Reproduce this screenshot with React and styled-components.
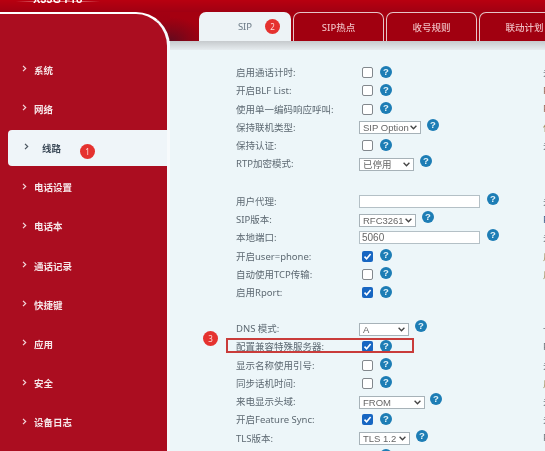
import React from "react";
import styled, { createGlobalStyle } from "styled-components";

const Global = createGlobalStyle`
  html, body { margin: 0; padding: 0; background: #edf6f9; }
  body { font-family: "Noto Sans", "Noto Sans CJK SC", sans-serif; }
`;

const Page = styled.div`
  width: 545px;
  height: 451px;
  overflow: hidden;
  display: flex;
  flex-direction: column;
  filter: blur(0.35px);
`;

const BrandStrip = styled.header`
  height: 12px;
  flex: none;
  overflow: hidden;
  background: linear-gradient(#b80010, #a00012);
  padding-left: 16px;
`;

const Brand = styled.div`
  width: 84px;
  height: 12px;
  margin-top: -7px;
  font-family: "Liberation Sans", sans-serif;
  font-size: 10.5px;
  line-height: 12px;
  font-weight: 700;
  color: #fff;
  text-align: center;
  letter-spacing: 0.3px;
  background: linear-gradient(90deg, transparent, rgba(255, 190, 190, 0.55) 25%, rgba(255, 190, 190, 0.55) 75%, transparent) 0 8px / 100% 1px no-repeat;
`;

const Body = styled.div`
  flex: 1;
  min-height: 0;
  display: flex;
  background: linear-gradient(#a30012 0, #a00012 8px, #6e0a1e 29px, #edf6f9 29px);
`;

const Sidebar = styled.nav`
  width: 167px;
  flex: none;
  background: #ab0d20;
  border-top: 2px solid #fff;
  border-right: 3px solid #f7fafc;
  border-top-right-radius: 34px;
  padding-top: 36px;
`;

const NavItem = styled.div`
  position: relative;
  height: ${(p) => (p.$active ? "36px" : "39.2px")};
  margin: ${(p) => (p.$active ? "1.6px 0 1.6px 8px" : "0")};
  padding-left: ${(p) => (p.$active ? "16px" : "22px")};
  display: flex;
  align-items: center;
  gap: ${(p) => (p.$active ? "13px" : "7px")};
  font-size: 9.5px;
  font-weight: 700;
  color: ${(p) => (p.$active ? "#3c4a58" : "#f6e6e8")};
  background: ${(p) => (p.$active ? "#eff5f9" : "transparent")};
  border-radius: ${(p) => (p.$active ? "4px 0 0 4px" : "0")};
  svg { flex: none; margin-top: -2px; }
`;

const Badge = styled.span`
  position: absolute;
  width: 15px;
  height: 15px;
  border-radius: 50%;
  background: #e5322f;
  color: #ffd9d6;
  font-size: 8px;
  font-weight: 400;
  line-height: 15px;
  text-align: center;
  left: ${(p) => p.$left}px;
  top: ${(p) => p.$top}px;
`;

const Main = styled.main`
  flex: 1;
  min-width: 0;
  display: flex;
  flex-direction: column;
`;

const TabBar = styled.div`
  height: 29px;
  flex: none;
  display: flex;
  gap: 2px;
  padding-left: 29px;
  overflow: hidden;
  background: radial-gradient(ellipse 36px 24px at 0 100%, #640a1e, rgba(120, 6, 24, 0.6) 55%, transparent), #a50010;
`;

const Tab = styled.div`
  position: relative;
  flex: none;
  width: ${(p) => (p.$active ? "92px" : "91px")};
  box-sizing: border-box;
  border: ${(p) => (p.$active ? "none" : "1px solid #e6c4c8")};
  border-bottom: none;
  border-radius: 7px 7px 0 0;
  background: ${(p) => (p.$active ? "#edf3f6" : "#a10010")};
  color: ${(p) => (p.$active ? "#6b7a86" : "#efbcc1")};
  font-size: 9.5px;
  font-weight: ${(p) => (p.$active ? 400 : 500)};
  display: flex;
  align-items: center;
  justify-content: center;
`;

const ShadowBand = styled.div`
  height: 9px;
  flex: none;
  background: linear-gradient(#c6cacd, #e6ecef);
`;

const Content = styled.div`
  flex: 1;
  min-height: 0;
  background: #edf6f9;
  padding: 13px 0 0 66px;
  overflow: hidden;
`;

const Spacer = styled.div`
  height: ${(p) => p.$h}px;
`;

const Row = styled.div`
  position: relative;
  height: 18.25px;
  display: flex;
  align-items: center;
  font-size: 9.5px;
  color: #5d6972;
  white-space: nowrap;
`;

const Label = styled.label`
  width: 123px;
  flex: none;
`;

const Control = styled.div`
  width: 184px;
  flex: none;
  display: flex;
  align-items: center;
  gap: ${(p) => p.$gap ?? 7}px;
`;

const Box = styled.span`
  width: 11px;
  height: 11px;
  box-sizing: border-box;
  margin: 1px 0 0 3px;
  border-radius: 2px;
  border: ${(p) => (p.$checked ? "none" : "1px solid #82888d")};
  background: ${(p) => (p.$checked ? "#1766c2" : "#fff")};
  display: flex;
  align-items: center;
  justify-content: center;
`;

const Help = styled.span`
  width: 12px;
  height: 12px;
  border-radius: 50%;
  background: #1d7db5;
  color: #e4f2f8;
  font-family: "Liberation Sans", sans-serif;
  font-size: 9.5px;
  font-weight: 700;
  line-height: 12px;
  text-align: center;
  margin-top: ${(p) => (p.$raised ? "-4px" : "-1px")};
`;

const chevron = encodeURIComponent(
  '<svg xmlns="http://www.w3.org/2000/svg" width="7" height="5" viewBox="0 0 7 5" fill="none" stroke="#444" stroke-width="1.3"><path d="M.6.8 3.5 3.8 6.4.8"/></svg>'
);

const Select = styled.select`
  appearance: none;
  width: ${(p) => p.$w}px;
  height: 13px;
  box-sizing: border-box;
  margin: 2px 0 0;
  padding: 0 0 0 3px;
  border: 1px solid #a7b2b8;
  border-radius: 0;
  background: #fff url("data:image/svg+xml,${chevron}") no-repeat right 3px center;
  color: #666;
  font: 9.5px/11px "Liberation Sans", "Noto Sans CJK SC", sans-serif;
`;

const Input = styled.input`
  width: 121px;
  height: 13px;
  box-sizing: border-box;
  margin: 1px 0 0;
  padding: 0 2px;
  border: 1px solid #b4c0c6;
  border-radius: 0;
  background: #fff;
  color: #666;
  font: 10px "Liberation Sans", sans-serif;
`;

const Note = styled.span`
  color: ${(p) => p.$color || "#70767c"};
`;

const Highlight = styled.div`
  position: absolute;
  left: -10px;
  top: 1px;
  width: 188px;
  height: 15px;
  box-sizing: border-box;
  border: 2px solid #c93c3a;
`;

const Chevron = ({ dark }) => (
  <svg width="5" height="7" viewBox="0 0 5 7" fill="none" stroke={dark ? "#4a5560" : "#f3d9dc"} strokeWidth="1.2">
    <path d="M1 .8 3.7 3.5 1 6.2" />
  </svg>
);

const Check = () => (
  <svg width="9" height="9" viewBox="0 0 9 9" fill="none" stroke="#fff" strokeWidth="1.6">
    <path d="M1.5 4.6 3.6 6.8 7.6 2" />
  </svg>
);

const nav = ["系统", "网络", "线路", "电话设置", "电话本", "通话记录", "快捷键", "应用", "安全", "设备日志"];
const tabs = ["SIP", "SIP热点", "收号规则", "联动计划"];

const groups = [
  {
    gap: 0,
    rows: [
      { label: "启用通话计时:", box: false, note: "关闭" },
      { label: "开启BLF List:", box: false, note: "P", color: "#9a6a5a" },
      { label: "使用单一编码响应呼叫:", box: false, note: "P", color: "#9a6a5a" },
      { label: "保持联机类型:", select: "SIP Option", w: 62, note: "保", color: "#a08a5a", gap: 6 },
      { label: "保持认证:", box: false, note: "关闭" },
      { label: "RTP加密模式:", select: "已停用", w: 55, gap: 6 },
    ],
  },
  {
    gap: 19.2,
    rows: [
      { label: "用户代理:", input: "", note: "关闭" },
      { label: "SIP版本:", select: "RFC3261", w: 57, note: "P", color: "#40608a", gap: 6 },
      { label: "本地端口:", input: "5060", note: "关" },
      { label: "开启user=phone:", box: true, note: "启", color: "#a08a5a" },
      { label: "自动使用TCP传输:", box: false, note: "启", color: "#a08a5a" },
      { label: "启用Rport:", box: true },
    ],
  },
  {
    gap: 17.8,
    rows: [
      { label: "DNS 模式:", select: "A", w: 50, note: "一", gap: 6 },
      { label: "配置兼容特殊服务器:", box: true, note: "P", mark: true },
      { label: "显示名称使用引号:", box: false, note: "关" },
      { label: "同步话机时间:", box: false, note: "启", color: "#a08a5a" },
      { label: "来电显示头域:", select: "FROM", w: 66, note: "关", gap: 5 },
      { label: "开启Feature Sync:", box: true, note: "关" },
      { label: "TLS版本:", select: "TLS 1.2", w: 51, note: "P", gap: 6 },
      { label: "", box: false },
    ],
  },
];

const FormRow = ({ row }) => (
  <Row>
    {row.mark && <Highlight />}
    {row.mark && <Badge $left={-33} $top={-6}>3</Badge>}
    <Label>{row.label}</Label>
    <Control $gap={row.gap}>
      {row.box !== undefined && (
        <Box $checked={row.box}>{row.box && <Check />}</Box>
      )}
      {row.select && (
        <Select $w={row.w} defaultValue={row.select}>
          <option>{row.select}</option>
        </Select>
      )}
      {row.input !== undefined && <Input defaultValue={row.input} />}
      <Help $raised={!!row.select || row.input !== undefined}>?</Help>
    </Control>
    {row.note && <Note $color={row.color}>{row.note}</Note>}
  </Row>
);

export default function App() {
  return (
    <>
      <Global />
      <Page>
        <BrandStrip>
          <Brand>X33G Pro</Brand>
        </BrandStrip>
        <Body>
          <Sidebar>
            {nav.map((n, i) => (
              <NavItem key={n} $active={i === 2}>
                <Chevron dark={i === 2} />
                <span>{n}</span>
                {i === 2 && <Badge $left={72} $top={14}>1</Badge>}
              </NavItem>
            ))}
          </Sidebar>
          <Main>
            <TabBar>
              {tabs.map((t, i) => (
                <Tab key={t} $active={i === 0}>
                  {t}
                  {i === 0 && <Badge $left={66} $top={7}>2</Badge>}
                </Tab>
              ))}
            </TabBar>
            <ShadowBand />
            <Content>
              {groups.map((g, i) => (
                <React.Fragment key={i}>
                  {i > 0 && <Spacer $h={g.gap} />}
                  {g.rows.map((r, j) => <FormRow key={j} row={r} />)}
                </React.Fragment>
              ))}
            </Content>
          </Main>
        </Body>
      </Page>
    </>
  );
}
